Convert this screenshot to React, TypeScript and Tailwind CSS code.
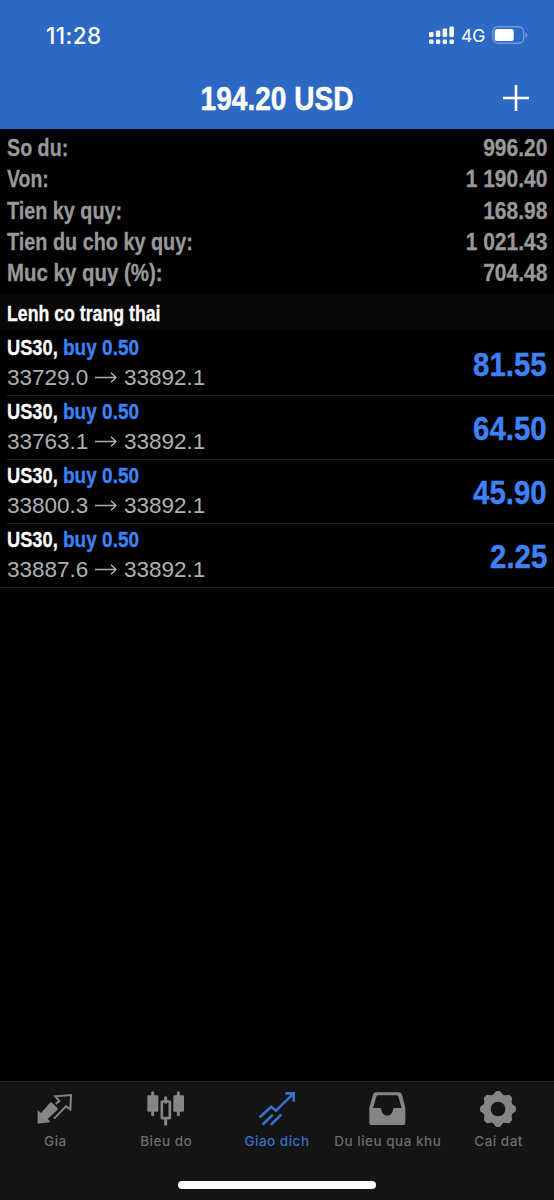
import type { ReactNode } from 'react';

const summary = [
  { label: 'So du:', value: '996.20', stretch: 'scale-x-[0.82]' },
  { label: 'Von:', value: '1 190.40', stretch: 'scale-x-[0.81]' },
  { label: 'Tien ky quy:', value: '168.98', stretch: 'scale-x-[0.825]' },
  { label: 'Tien du cho ky quy:', value: '1 021.43', stretch: 'scale-x-[0.826]' },
  { label: 'Muc ky quy (%):', value: '704.48', stretch: 'scale-x-[0.852]' },
];

const positions = [
  { symbol: 'US30', side: 'buy 0.50', open: '33729.0', current: '33892.1', profit: '81.55' },
  { symbol: 'US30', side: 'buy 0.50', open: '33763.1', current: '33892.1', profit: '64.50' },
  { symbol: 'US30', side: 'buy 0.50', open: '33800.3', current: '33892.1', profit: '45.90' },
  { symbol: 'US30', side: 'buy 0.50', open: '33887.6', current: '33892.1', profit: '2.25' },
];

function QuotesIcon() {
  return (
    <svg viewBox="0 0 120 120" className="size-10" fill="none">
      <path d="M8 107V66l10 9 27-31q3-2 6 0l16 16q2 3 0 6L38 93l9 9z" fill="currentColor" />
      <path d="M62 48l11-9-12-14 47-4-2 43-13-9-36 37" stroke="currentColor" strokeWidth="6" />
    </svg>
  );
}

function ChartIcon() {
  return (
    <svg viewBox="0 0 120 120" className="size-10" fill="none" stroke="currentColor">
      <path d="M20 14v66M97 14v66M59 29v14M59 92v17" strokeWidth="9" strokeLinecap="round" />
      <rect x="4" y="22" width="33" height="49" rx="3" fill="currentColor" stroke="none" />
      <rect x="82" y="22" width="32" height="49" rx="3" fill="currentColor" stroke="none" />
      <rect x="47.500" y="40.500" width="24" height="50" rx="1" strokeWidth="8" />
    </svg>
  );
}

function TradeIcon() {
  return (
    <svg viewBox="0 0 120 120" className="size-10" fill="none" stroke="currentColor" strokeWidth="8" strokeLinecap="round">
      <path d="M10 86l33-30 14 12 49-48" />
      <path d="M85 16h25v25" strokeLinecap="butt" />
      <path d="M19 108l26-26M44 108l27-26" />
    </svg>
  );
}

function HistoryIcon() {
  return (
    <svg viewBox="0 0 120 120" className="size-10" fill="currentColor">
      <path
        fillRule="evenodd"
        d="M24 13h68q7 0 10 7l10 39v46q0 6-6 6H10q-6 0-6-6V59l11-39q2-7 9-7zM31 22q-5 0-6 4L15 60h22q3 0 3 5c2 23 33 23 35 0q0-5 3-5h23l-10-34q-1-4-6-4z"
      />
    </svg>
  );
}

function SettingsIcon() {
  return (
    <svg viewBox="0 0 120 120" className="size-10">
      <g fill="currentColor">
        <circle cx="57" cy="63" r="45" />
        {[0, 45, 90, 135].map((angle) => (
          <path
            key={angle}
            transform={`rotate(${angle} 57 63)`}
            d="M41 22l6-8q2-5 7-5h6q5 0 7 5l6 8v82l-6 8q-2 5-7 5h-6q-5 0-7-5l-6-8z"
          />
        ))}
      </g>
      <circle cx="57" cy="63" r="22" fill="#141414" />
    </svg>
  );
}

const tabs: { label: string; icon: ReactNode; active?: boolean }[] = [
  { label: 'Gia', icon: <QuotesIcon /> },
  { label: 'Bieu do', icon: <ChartIcon /> },
  { label: 'Giao dich', icon: <TradeIcon />, active: true },
  { label: 'Du lieu qua khu', icon: <HistoryIcon /> },
  { label: 'Cai dat', icon: <SettingsIcon /> },
];

function StatusBar() {
  return (
    <div className="flex h-[70px] items-center justify-between pl-[46px] pr-[26px] text-white">
      <span className="mt-px font-['Inter',sans-serif] text-[22.500px] font-medium tracking-[0.4px]">11:28</span>
      <div className="flex items-center">
        <svg viewBox="0 0 25 18" className="mr-[7px] h-[18px] w-[25px]" fill="currentColor">
          <rect x="0" y="6" width="4.500" height="5" rx="1.300" />
          <rect x="6.800" y="4.500" width="4.500" height="6.500" rx="1.300" />
          <rect x="13.600" y="2.500" width="4.500" height="8.500" rx="1.300" />
          <rect x="20.400" y="0.500" width="4.500" height="10.500" rx="1.300" />
          <rect x="0" y="13.500" width="4.500" height="4.500" rx="1.400" />
          <rect x="6.800" y="13.500" width="4.500" height="4.500" rx="1.400" />
          <rect x="13.600" y="13.500" width="4.500" height="4.500" rx="1.400" />
          <rect x="20.400" y="13.500" width="4.500" height="4.500" rx="1.400" />
        </svg>
        <span className="mt-0.5 w-[31px] font-['Inter',sans-serif] text-[17.500px]">4G</span>
        <svg viewBox="0 0 36 18" className="h-[18px] w-9" fill="none">
          <rect x="0.750" y="0.750" width="31" height="16.500" rx="5" stroke="#6f9ce0" strokeWidth="1.300" />
          <rect x="2.700" y="3" width="19" height="12" rx="2.500" fill="white" />
          <path d="M33.500 6.500q2 .8 2 2.500t-2 2.500z" fill="#6f9ce0" />
        </svg>
      </div>
    </div>
  );
}

export default function App() {
  return (
    <div className="flex h-[1200px] w-[554px] flex-col overflow-hidden bg-black font-['Liberation_Sans',Arial,sans-serif]">
      <header className="h-[129px] shrink-0 bg-[#2d68c4]">
        <StatusBar />
        <div className="grid h-[58px] grid-cols-[60px_1fr_60px] items-center text-white">
          <span />
          <h1 className="scale-x-[0.85] text-center text-[33px] font-bold whitespace-nowrap [-webkit-text-stroke:0.500px]">194.20 USD</h1>
          <svg viewBox="0 0 26 26" className="-mt-0.5 ml-[9px] size-[26px]" stroke="currentColor" strokeWidth="2.600">
            <path d="M13 0v26M0 13h26" />
          </svg>
        </div>
      </header>

      <main className="flex-1">
        <dl className="h-[166px] px-[7px] pt-[3.5px] text-[24px] font-bold text-[#999] [-webkit-text-stroke:0.300px]">
          {summary.map((row) => (
            <div key={row.label} className="flex h-[31.3px] items-center justify-between">
              <dt className={`origin-left ${row.stretch}`}>{row.label}</dt>
              <dd className="origin-right scale-x-[0.875]">{row.value}</dd>
            </div>
          ))}
        </dl>

        <div className="flex h-9 items-center bg-[#080808] px-[7px]">
          <h2 className="origin-left scale-x-[0.805] text-[22px] font-bold text-white [-webkit-text-stroke:0.300px]">Lenh co trang thai</h2>
        </div>

        <ul className="pt-px">
          {positions.map((position, index) => (
            <li key={position.open} className={index === positions.length - 1 ? 'border-b border-[#222]' : 'pl-[7px]'}>
              <div
                className={
                  index === positions.length - 1
                    ? 'flex h-[63px] items-center justify-between pr-[7px] pl-[7px]'
                    : 'flex h-16 items-center justify-between border-b border-[#222] pr-[7px]'
                }
              >
                <div className="pb-[2px]">
                  <div className="flex h-[30px] items-center text-[22px] font-bold [-webkit-text-stroke:0.300px]">
                    <span className="w-14">
                      <span className="inline-block origin-left scale-x-[0.83] text-white">{position.symbol},</span>
                    </span>
                    <span className="origin-left scale-x-[0.865] text-[#3d83f7]">{position.side}</span>
                  </div>
                  <div className="flex h-[30px] items-center text-[22.500px] text-[#b0b0b0]">
                    <span className="w-[87px]">{position.open}</span>
                    <svg viewBox="0 0 23 12" className="mr-[7px] h-3 w-[23px]" fill="none" stroke="currentColor" strokeWidth="1.400">
                      <path d="M1 5.500h21M17 .8l5 4.700-5 4.700" />
                    </svg>
                    <span>{position.current}</span>
                  </div>
                </div>
                <span className="mt-0.5 origin-right scale-x-[0.89] text-[33px] font-bold text-[#3d83f7] [-webkit-text-stroke:0.400px]">
                  {position.profit}
                </span>
              </div>
            </li>
          ))}
        </ul>
      </main>

      <nav className="h-[119px] shrink-0 border-t border-[#222] bg-[#141414] pt-[6px]">
        <div className="grid grid-cols-5">
          {tabs.map((tab) => (
            <a
              key={tab.label}
              className={
                tab.active
                  ? 'flex flex-col items-center text-[#3570cc]'
                  : 'flex flex-col items-center text-[#858585]'
              }
            >
              {tab.icon}
              <span
                className={
                  tab.active
                    ? "mt-[3px] font-['Inter',sans-serif] text-[13.500px] leading-5 font-medium tracking-[0.5px] whitespace-nowrap"
                    : "mt-[3px] font-['Inter',sans-serif] text-[13.500px] leading-5 font-medium tracking-[0.5px] whitespace-nowrap text-[#6c6c6c]"
                }
              >
                {tab.label}
              </span>
            </a>
          ))}
        </div>
        <div className="mx-auto mt-[30px] h-2 w-[198px] rounded-full bg-white" />
      </nav>
    </div>
  );
}
